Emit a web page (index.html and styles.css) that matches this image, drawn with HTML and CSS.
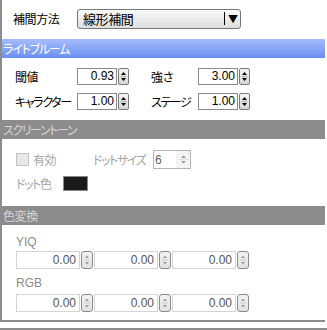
FILE: index.html
```html
<!DOCTYPE html>
<html lang="ja">
<head>
    <meta charset="UTF-8">
    <title>エフェクト設定</title>
    <link rel="stylesheet" href="styles.css">
</head>
<body>
    <div class="panel">
        <div class="method-row">
            <span class="method-label">補間方法</span>
            <div class="select">
                <span class="select-text">線形補間</span>
                <span class="select-sep"></span>
                <span class="select-arrow">▼</span>
            </div>
        </div>

        <div class="section-head blue">ライトブルーム</div>
        <div class="bloom">
            <span class="label">閾値</span>
            <div class="num-group">
                <div class="num">0.93</div>
                <div class="spin"><svg width="9" height="15" viewBox="0 0 9 15"><path d="M4.5 3 L7 6 L2 6 Z M2 9 L7 9 L4.5 12 Z" fill="#000"/><path d="M1.5 7.5 H7.5" stroke="#b0b0b0"/></svg></div>
            </div>
            <span class="label">強さ</span>
            <div class="num-group">
                <div class="num">3.00</div>
                <div class="spin"><svg width="9" height="15" viewBox="0 0 9 15"><path d="M4.5 3 L7 6 L2 6 Z M2 9 L7 9 L4.5 12 Z" fill="#000"/><path d="M1.5 7.5 H7.5" stroke="#b0b0b0"/></svg></div>
            </div>
            <span class="label kana">キャラクター</span>
            <div class="num-group">
                <div class="num">1.00</div>
                <div class="spin"><svg width="9" height="15" viewBox="0 0 9 15"><path d="M4.5 3 L7 6 L2 6 Z M2 9 L7 9 L4.5 12 Z" fill="#000"/><path d="M1.5 7.5 H7.5" stroke="#b0b0b0"/></svg></div>
            </div>
            <span class="label kana">ステージ</span>
            <div class="num-group">
                <div class="num">1.00</div>
                <div class="spin"><svg width="9" height="15" viewBox="0 0 9 15"><path d="M4.5 3 L7 6 L2 6 Z M2 9 L7 9 L4.5 12 Z" fill="#000"/><path d="M1.5 7.5 H7.5" stroke="#b0b0b0"/></svg></div>
            </div>
        </div>

        <div class="section-head gray kana">スクリーントーン</div>
        <div class="tone">
            <div class="tone-row">
                <span class="check"></span>
                <span class="dim check-label">有効</span>
                <span class="dim size-label kana">ドットサイズ</span>
                <div class="size-box">
                    <span class="size-val">6</span>
                    <div class="size-spin"><svg width="13" height="15" viewBox="0 0 13 15"><path d="M6.5 3.5 L9 6 L4 6 Z M4 9 L9 9 L6.5 11.5 Z" fill="#9a9a9a"/><path d="M1 7.5 H12" stroke="#e0e0e0"/></svg></div>
                </div>
            </div>
            <div class="tone-row second">
                <span class="dim color-label kana">ドット色</span>
                <span class="swatch"></span>
            </div>
        </div>

        <div class="section-head gray">色変換</div>
        <div class="convert">
            <div class="conv-label">YIQ</div>
            <div class="conv-row">
                <div class="conv-group"><div class="conv-num">0.00</div><div class="conv-spin"><svg width="10" height="16" viewBox="0 0 10 16"><path d="M5 3.5 L7 6 L3 6 Z M3 10 L7 10 L5 12.5 Z" fill="#9a9a9a"/><path d="M2 8 H8" stroke="#cfcfcf"/></svg></div></div>
                <div class="conv-group"><div class="conv-num">0.00</div><div class="conv-spin"><svg width="10" height="16" viewBox="0 0 10 16"><path d="M5 3.5 L7 6 L3 6 Z M3 10 L7 10 L5 12.5 Z" fill="#9a9a9a"/><path d="M2 8 H8" stroke="#cfcfcf"/></svg></div></div>
                <div class="conv-group"><div class="conv-num">0.00</div><div class="conv-spin"><svg width="10" height="16" viewBox="0 0 10 16"><path d="M5 3.5 L7 6 L3 6 Z M3 10 L7 10 L5 12.5 Z" fill="#9a9a9a"/><path d="M2 8 H8" stroke="#cfcfcf"/></svg></div></div>
            </div>
            <div class="conv-label rgb">RGB</div>
            <div class="conv-row">
                <div class="conv-group"><div class="conv-num">0.00</div><div class="conv-spin"><svg width="10" height="16" viewBox="0 0 10 16"><path d="M5 3.5 L7 6 L3 6 Z M3 10 L7 10 L5 12.5 Z" fill="#9a9a9a"/><path d="M2 8 H8" stroke="#cfcfcf"/></svg></div></div>
                <div class="conv-group"><div class="conv-num">0.00</div><div class="conv-spin"><svg width="10" height="16" viewBox="0 0 10 16"><path d="M5 3.5 L7 6 L3 6 Z M3 10 L7 10 L5 12.5 Z" fill="#9a9a9a"/><path d="M2 8 H8" stroke="#cfcfcf"/></svg></div></div>
                <div class="conv-group"><div class="conv-num">0.00</div><div class="conv-spin"><svg width="10" height="16" viewBox="0 0 10 16"><path d="M5 3.5 L7 6 L3 6 Z M3 10 L7 10 L5 12.5 Z" fill="#9a9a9a"/><path d="M2 8 H8" stroke="#cfcfcf"/></svg></div></div>
            </div>
        </div>
    </div>
    <div class="footer"></div>
</body>
</html>
```

FILE: styles.css
```css
body {
    margin: 0;
    font-family: "Noto Sans CJK JP", "Liberation Sans", sans-serif;
    font-size: 12px;
    line-height: 14px;
    font-feature-settings: "palt";
    letter-spacing: -0.4px;
    white-space: nowrap;
    color: #000;
    background: #fff;
}
.kana {
    letter-spacing: -1.4px;
}
.panel {
    width: 325px;
    border-left: 2px solid #8c8c8c;
    border-bottom: 2px solid #8c8c8c;
    height: 322px;
    box-sizing: border-box;
    overflow: hidden;
}
.method-row {
    height: 39px;
    display: flex;
    align-items: center;
    padding-left: 11px;
    padding-bottom: 2px;
    box-sizing: border-box;
}
.method-label {
    width: 64px;
}
.select {
    width: 164px;
    height: 20px;
    box-sizing: border-box;
    border: 1px solid #777;
    border-radius: 3px;
    background: linear-gradient(#fafafa, #dedede);
    display: flex;
    align-items: center;
    padding-left: 5px;
}
.select-text {
    flex: 1;
    font-size: 13px;
}
.select-sep {
    width: 1px;
    height: 13px;
    background: #000;
    margin-right: 3px;
}
.select-arrow {
    font-size: 10px;
    width: 12px;
}
.section-head {
    height: 19px;
    line-height: 19px;
    padding-left: 3px;
    margin-left: -2px;
    width: 327px;
    box-sizing: border-box;
    font-size: 12px;
}
.blue {
    background: linear-gradient(#a6bdfc, #6a8ff1);
    color: #fff;
    letter-spacing: -1.2px;
}
.gray {
    background: #8c8c8c;
    color: #d6d6d6;
}
.bloom {
    display: grid;
    grid-template-columns: 62px 74px 47px auto;
    grid-auto-rows: 17px;
    row-gap: 8px;
    align-items: center;
    padding: 10px 0 10px 13px;
}
.num-group {
    display: flex;
    gap: 1px;
}
.num {
    width: 40px;
    height: 17px;
    box-sizing: border-box;
    border: 1px solid #8a8a8a;
    text-align: right;
    padding-right: 2px;
    line-height: 15px;
    letter-spacing: 0;
    font-family: "Liberation Sans", sans-serif;
}
.spin {
    width: 11px;
    height: 17px;
    box-sizing: border-box;
    border: 1px solid #7a7a7a;
    border-radius: 2px;
    background: linear-gradient(#f6f6f6, #d6d6d6);
    display: flex;
    align-items: center;
    justify-content: center;
}
.tone {
    height: 67px;
    box-sizing: border-box;
    padding: 11px 0 0 14px;
}
.tone-row {
    display: flex;
    align-items: center;
}
.tone-row.second {
    margin-top: 7px;
}
.dim {
    color: #a4a4a4;
}
.check {
    width: 13px;
    height: 13px;
    box-sizing: border-box;
    border: 1px solid #c4c4c4;
    background: #e8e8e8;
}
.check-label {
    margin-left: 4px;
    width: 60px;
}
.size-label {
    width: 60px;
}
.size-box {
    width: 38px;
    height: 19px;
    box-sizing: border-box;
    border: 1px solid #b4b4b4;
    display: flex;
    align-items: center;
    justify-content: space-between;
}
.size-val {
    padding-left: 1px;
    color: #606060;
    font-family: "Liberation Sans", sans-serif;
}
.size-spin {
    width: 14px;
    height: 17px;
    background: #f4f4f4;
    display: flex;
    align-items: center;
    justify-content: center;
}
.color-label {
    width: 47px;
}
.swatch {
    width: 25px;
    height: 15px;
    box-sizing: border-box;
    border: 1px solid #8a8a8a;
    background: #1a1a1a;
}
.convert {
    padding: 10px 0 0 14px;
}
.conv-label {
    color: #8a8a8a;
    line-height: 14px;
    margin-bottom: 2px;
    letter-spacing: 0;
    font-family: "Liberation Sans", sans-serif;
}
.conv-label.rgb {
    margin-top: 7px;
    margin-bottom: 4px;
}
.conv-row {
    display: flex;
}
.conv-group {
    width: 78px;
    display: flex;
    gap: 1px;
}
.conv-num {
    width: 64px;
    height: 18px;
    box-sizing: border-box;
    border: 1px solid #d4d4d4;
    text-align: right;
    padding-right: 3px;
    line-height: 16px;
    color: #555;
    letter-spacing: 0;
    font-family: "Liberation Sans", sans-serif;
}
.conv-spin {
    width: 12px;
    height: 18px;
    box-sizing: border-box;
    border: 1px solid #8a8a8a;
    border-radius: 3px;
    background: linear-gradient(#f2f2f2, #e2e2e2);
    display: flex;
    align-items: center;
    justify-content: center;
}
.footer {
    height: 6px;
    border-bottom: 2px solid #8c8c8c;
}
```
